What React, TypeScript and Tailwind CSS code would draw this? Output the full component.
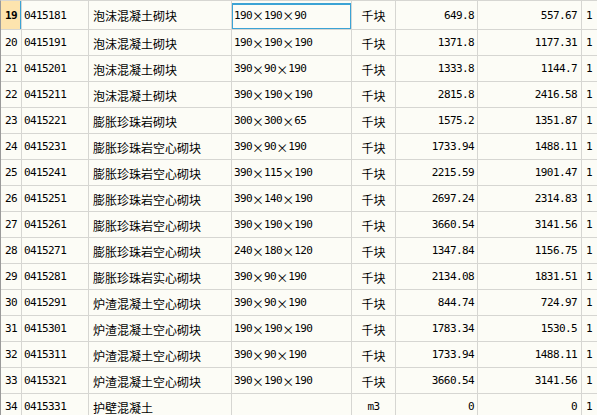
import React from 'react';

type Row = {
    no: number;
    code: string;
    name: string;
    spec: string;
    unit: string;
    price: string;
    taxFree: string;
};

const rows: Row[] = [
    { no: 19, code: '0415181', name: '泡沫混凝土砌块', spec: '190×190×90', unit: '千块', price: '649.8', taxFree: '557.67' },
    { no: 20, code: '0415191', name: '泡沫混凝土砌块', spec: '190×190×190', unit: '千块', price: '1371.8', taxFree: '1177.31' },
    { no: 21, code: '0415201', name: '泡沫混凝土砌块', spec: '390×90×190', unit: '千块', price: '1333.8', taxFree: '1144.7' },
    { no: 22, code: '0415211', name: '泡沫混凝土砌块', spec: '390×190×190', unit: '千块', price: '2815.8', taxFree: '2416.58' },
    { no: 23, code: '0415221', name: '膨胀珍珠岩砌块', spec: '300×300×65', unit: '千块', price: '1575.2', taxFree: '1351.87' },
    { no: 24, code: '0415231', name: '膨胀珍珠岩空心砌块', spec: '390×90×190', unit: '千块', price: '1733.94', taxFree: '1488.11' },
    { no: 25, code: '0415241', name: '膨胀珍珠岩空心砌块', spec: '390×115×190', unit: '千块', price: '2215.59', taxFree: '1901.47' },
    { no: 26, code: '0415251', name: '膨胀珍珠岩空心砌块', spec: '390×140×190', unit: '千块', price: '2697.24', taxFree: '2314.83' },
    { no: 27, code: '0415261', name: '膨胀珍珠岩空心砌块', spec: '390×190×190', unit: '千块', price: '3660.54', taxFree: '3141.56' },
    { no: 28, code: '0415271', name: '膨胀珍珠岩空心砌块', spec: '240×180×120', unit: '千块', price: '1347.84', taxFree: '1156.75' },
    { no: 29, code: '0415281', name: '膨胀珍珠岩实心砌块', spec: '390×90×190', unit: '千块', price: '2134.08', taxFree: '1831.51' },
    { no: 30, code: '0415291', name: '炉渣混凝土空心砌块', spec: '390×90×190', unit: '千块', price: '844.74', taxFree: '724.97' },
    { no: 31, code: '0415301', name: '炉渣混凝土空心砌块', spec: '190×190×190', unit: '千块', price: '1783.34', taxFree: '1530.5' },
    { no: 32, code: '0415311', name: '炉渣混凝土空心砌块', spec: '390×90×190', unit: '千块', price: '1733.94', taxFree: '1488.11' },
    { no: 33, code: '0415321', name: '炉渣混凝土空心砌块', spec: '390×190×190', unit: '千块', price: '3660.54', taxFree: '3141.56' },
    { no: 34, code: '0415331', name: '护壁混凝土', spec: '', unit: 'm3', price: '0', taxFree: '0' },
];

const num = "font-['DejaVu_Sans_Mono',monospace] text-[11px] tracking-[-0.6px]";
const cjk = "font-['Noto_Sans_CJK_SC',sans-serif] text-[12px]";
const cell = 'flex items-center pt-[2px] shrink-0 border-r border-[#d6d6d2] overflow-hidden whitespace-nowrap';

// spec text, with the full-width × of the original font
const Spec: React.FC<{ text: string }> = ({ text }) => {
    const parts = text.split('×');
    return (
        <span className="flex items-center">
            {parts.map((p, i) => (
                <React.Fragment key={i}>
                    {i > 0 && <span className={`${cjk} inline-block w-[12px] text-center`}>×</span>}
                    <span className={num}>{p}</span>
                </React.Fragment>
            ))}
        </span>
    );
};

const App: React.FC = () => {
    return (
        <div className="w-[597px] h-[415px] overflow-hidden bg-[#fcfcf6] text-black">
            <div className="border-l border-[#9a9a9a] border-t border-t-[#d6d6d2] flex flex-col">
                {rows.map((r, i) => {
                    const selected = i === 0;
                    return (
                        <div
                            key={r.no}
                            className={`flex border-b border-[#d6d6d2] ${selected ? 'h-[29px]' : 'h-[26px]'}`}
                        >
                            <div
                                className={`${cell} relative w-[21px] justify-center ${selected ? 'bg-[#fde4ae]' : ''}`}
                            >
                                <span className={`${num} ${selected ? 'font-bold' : ''}`}>{r.no}</span>
                                {selected && <div className="absolute right-[-1px] top-0 bottom-0 w-[2px] bg-[#3ba3d5]" />}
                            </div>
                            <div className={`${cell} w-[67px] pl-[2px]`}>
                                <span className={num}>{r.code}</span>
                            </div>
                            <div className={`${cell} w-[143px] pl-[4px]`}>
                                <span className={cjk}>{r.name}</span>
                            </div>
                            <div className={`${cell} relative w-[120px] pl-[2px]`}>
                                {r.spec && <Spec text={r.spec} />}
                                {selected && (
                                    <div className="absolute left-[-1px] right-[-1px] top-[2px] bottom-[-1px] border-2 border-[#3ba3d5]" />
                                )}
                            </div>
                            <div className={`${cell} w-[44px] justify-center`}>
                                <span className={r.unit === 'm3' ? num : cjk}>{r.unit}</span>
                            </div>
                            <div className={`${cell} w-[82px] justify-end pr-[3px]`}>
                                <span className={num}>{r.price}</span>
                            </div>
                            <div className={`${cell} w-[104px] justify-end pr-[4px]`}>
                                <span className={num}>{r.taxFree}</span>
                            </div>
                            <div className={`${cell} flex-1 pl-[4px] border-r-0`}>
                                <span className={num}>1</span>
                            </div>
                        </div>
                    );
                })}
            </div>
        </div>
    );
};

export default App;
